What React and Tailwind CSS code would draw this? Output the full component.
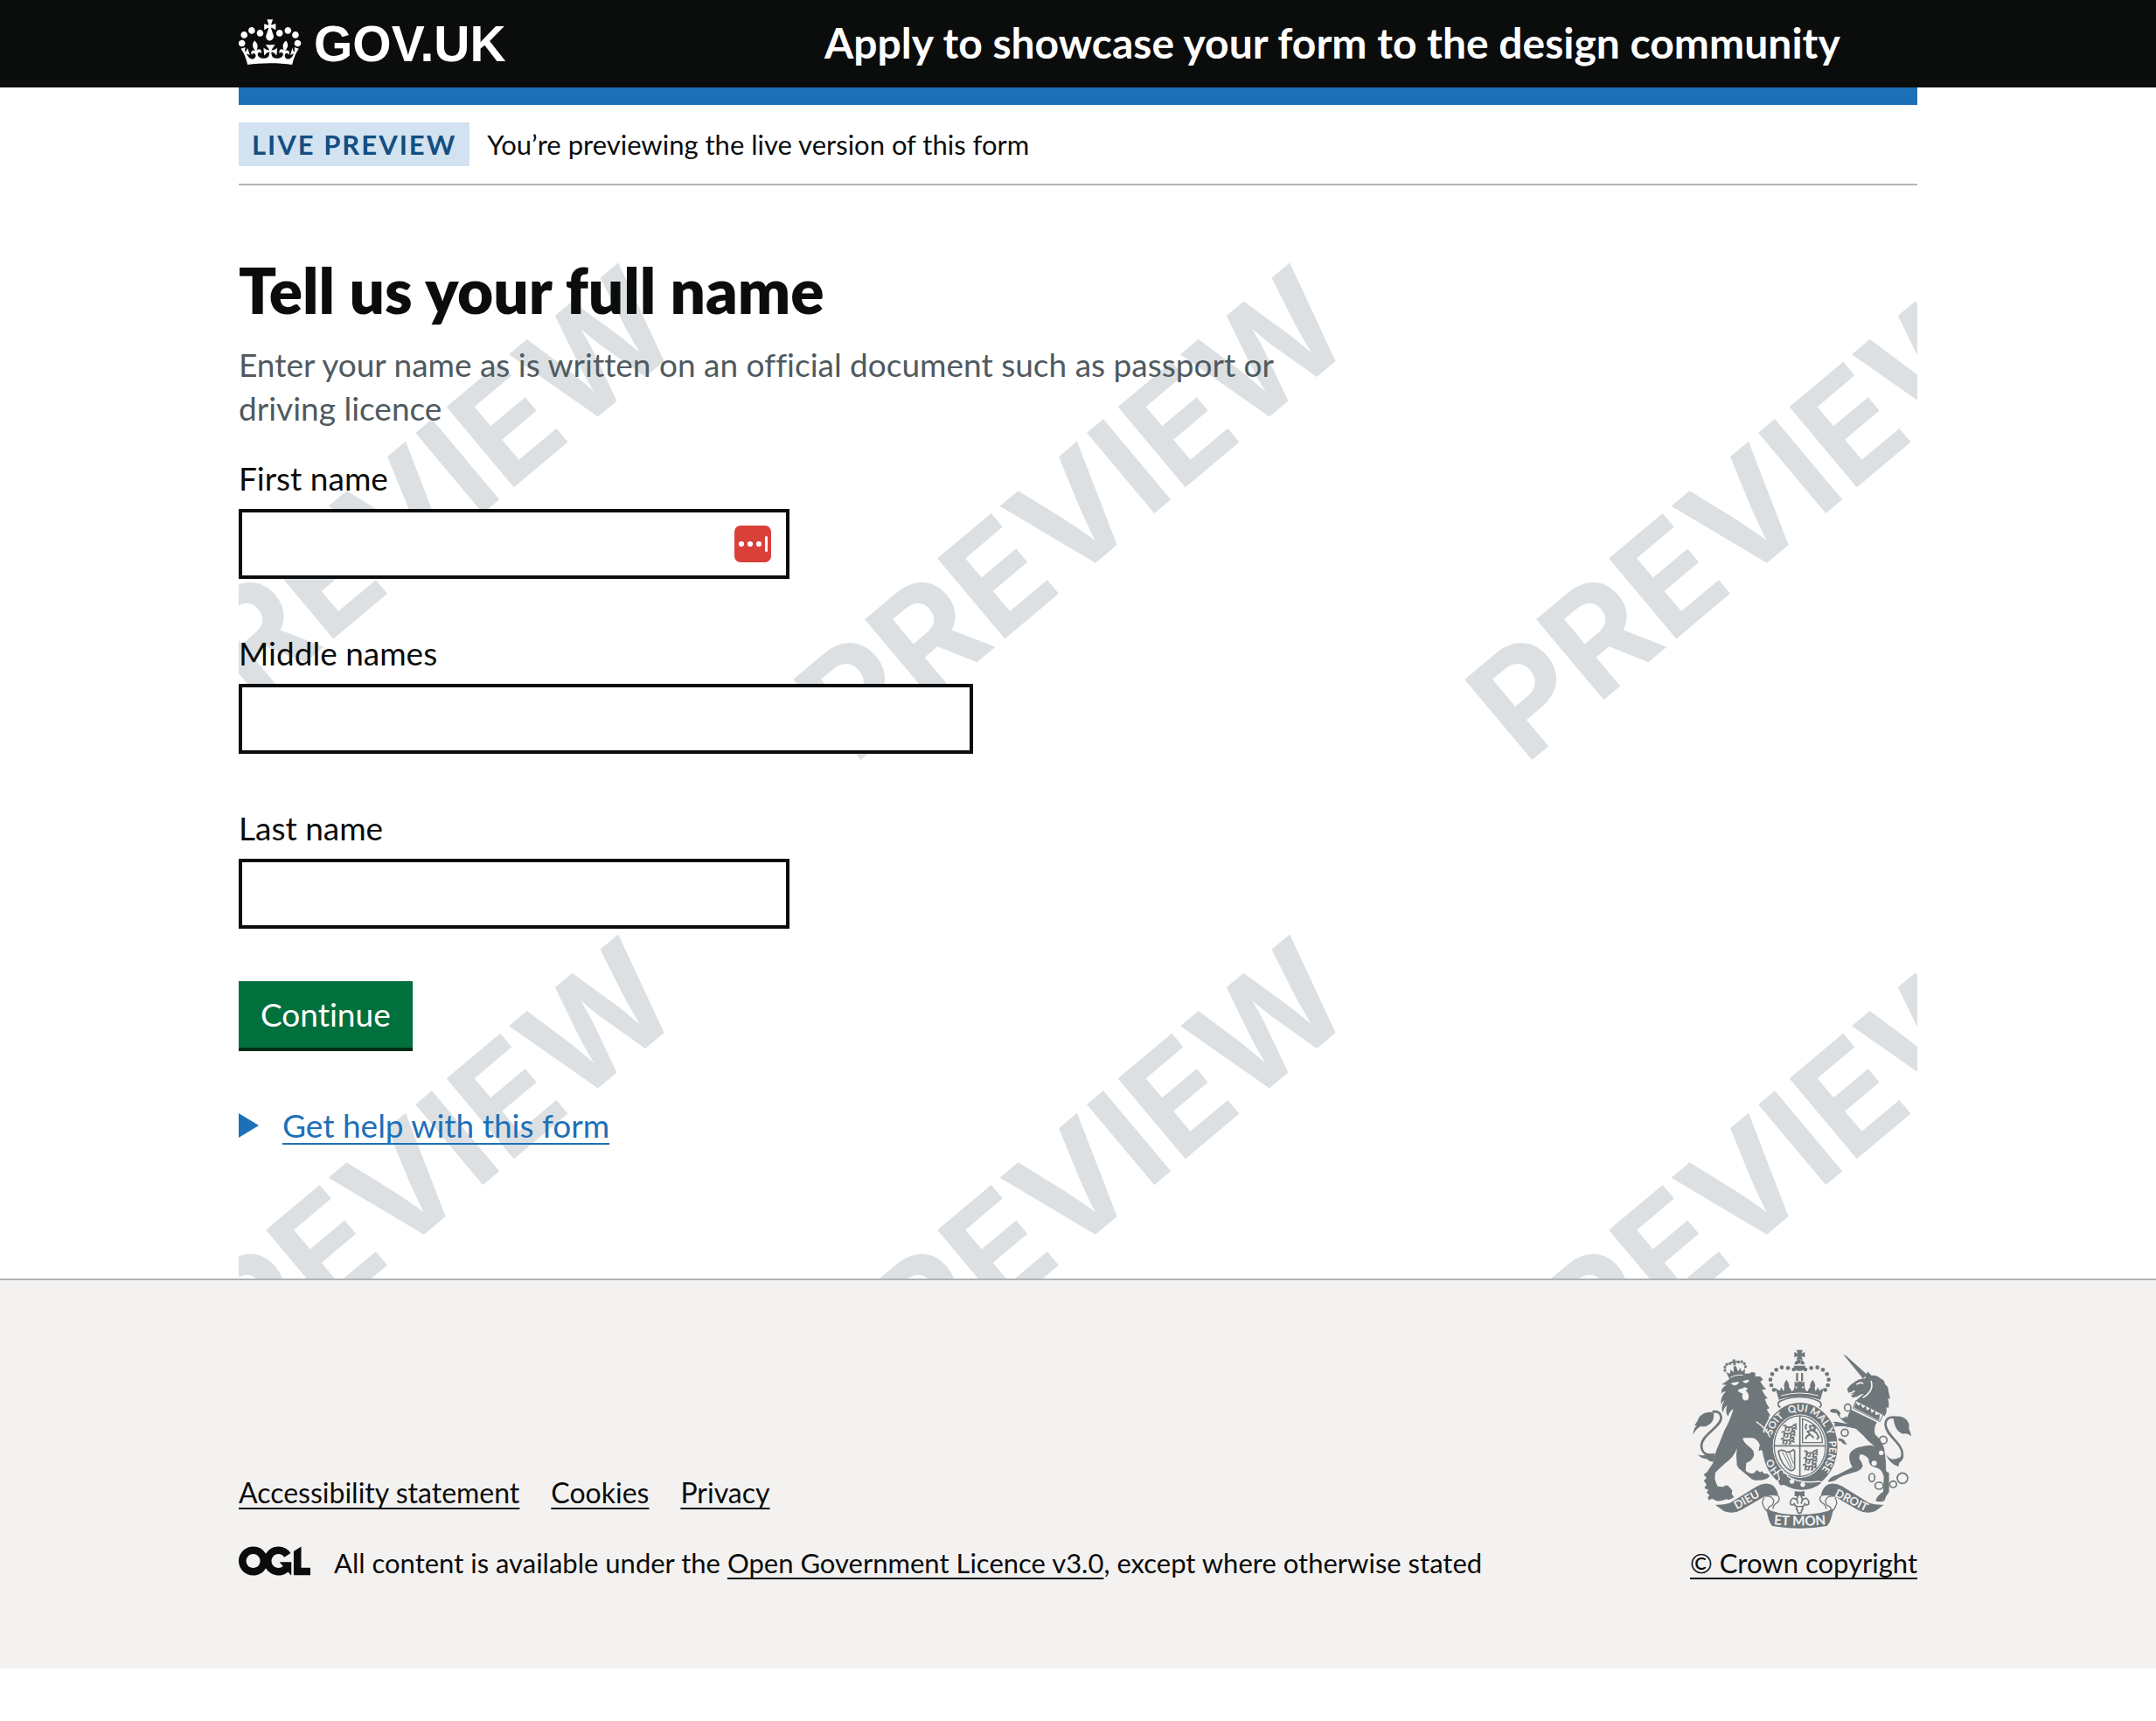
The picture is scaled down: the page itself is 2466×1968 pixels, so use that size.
import React from "react";

const CROWN =
  "M6.7 12.2c1 .4 2.1-.1 2.5-1s-.1-2.1-1-2.5c-1-.4-2.1.1-2.5 1-.4 1 0 2.1 1 2.5m-4.3 2.5c1 .4 2.1-.1 2.5-1s-.1-2.1-1-2.5c-1-.4-2.1.1-2.5 1-.5 1 0 2.1 1 2.5m-1.3 4.8c1 .4 2.1-.1 2.5-1 .4-1-.1-2.1-1-2.5-1-.4-2.1.1-2.5 1-.4 1 0 2.1 1 2.5m10.4-5.8c1 .4 2.1-.1 2.5-1s-.1-2.1-1-2.5c-1-.4-2.1.1-2.5 1s0 2.1 1 2.5m17.4-1.5c-1 .4-2.1-.1-2.5-1s.1-2.1 1-2.5c1-.4 2.1.1 2.5 1 .5 1 0 2.1-1 2.5m4.3 2.5c-1 .4-2.1-.1-2.5-1s.1-2.1 1-2.5c1-.4 2.1.1 2.5 1 .5 1 0 2.1-1 2.5m1.3 4.8c-1 .4-2.1-.1-2.5-1-.4-1 .1-2.1 1-2.5 1-.4 2.1.1 2.5 1 .4 1 0 2.1-1 2.5m-10.4-5.8c-1 .4-2.1-.1-2.5-1s.1-2.1 1-2.5c1-.4 2.1.1 2.5 1s0 2.1-1 2.5m-5.3-4.9 2.4 1.3V6.5l-2.4.8c-.1-.1-.1-.2-.2-.2s1-3 1-3h-3.4l1 3c-.1.1-.2.1-.2.2-.1.1-2.4-.7-2.4-.7v3.5L17 8.8c-.1.1 0 .2.1.3l-1.4 4.2c-.1.2-.1.4-.1.7 0 1.1.8 2.1 1.9 2.2h.6C19.2 16 20 15.1 20 14c0-.2 0-.4-.1-.7l-1.4-4.2c.2-.1.3-.2.3-.3m-1 20.3c4.6 0 8.9.3 12.8.9 1.1-4.6 2.4-7.2 3.8-9.1l-2.6-.9c.3 1.3.3 1.9 0 2.8-.4-.4-.8-1.2-1.1-2.4l-1.2 4.2c.8-.5 1.3-.9 2-.9-1.1 2.6-2.7 3.2-3.6 3-1.2-.2-1.7-1.3-1.5-2.2.3-1.3 1.6-1.5 2.2-.1 1.2-2.4-.8-3.1-2.1-2.4 1.9-1.9 2.1-3.6.6-5.7-2.1 1.6-2.2 3.3-1.2 5.6-1.3-1.5-3.3-.7-2.5 1.7.9-1.4 2.1-.5 2 .8-.2 1.2-1.7 2.1-3.7 2-2.8-.2-3-2.2-3-3.7.7-.1 1.9.5 3 2l.4-4.4c-1.1 1.2-2.2 1.4-3.3 1.4.4-1.2 2.1-3.1 2.1-3.1h-5.5s1.8 2 2.1 3.1c-1.1 0-2.2-.3-3.3-1.4l.4 4.4c1.1-1.5 2.3-2.1 3-2-.1 1.6-.2 3.5-3 3.7-1.9.2-3.5-.8-3.7-2-.2-1.3 1-2.2 1.9-.8.7-2.4-1.3-3.1-2.6-1.7 1-2.3.9-4-1.2-5.6-1.5 2.1-1.3 3.8.6 5.7-1.3-.7-3.2 0-2.1 2.4.6-1.4 1.9-1.1 2.2.1.2.9-.4 1.9-1.5 2.2-1 .2-2.5-.5-3.7-3 .7 0 1.3.4 2 .9L5 20.4c-.3 1.2-.7 1.9-1.2 2.4-.3-.8-.2-1.5 0-2.8l-2.6.9C2.7 22.8 4 25.4 5.1 30c3.8-.5 8.2-.9 12.7-.9";

const OGL =
  "M421.5 142.8V.1l-50.7 32.3v161.1h112.4v-50.7zm-122.3-9.6A47.12 47.12 0 0 1 221 97.8c0-26 21.1-47.1 47.1-47.1 16.7 0 31.4 8.7 39.7 21.8l42.7-27.2A97.63 97.63 0 0 0 268.1 0c-36.5 0-68.3 20.1-85.1 49.7A98 98 0 0 0 97.8 0C43.9 0 0 43.9 0 97.8s43.9 97.8 97.8 97.8c36.5 0 68.3-20.1 85.1-49.7a97.76 97.76 0 0 0 149.6 25.4l19.4 22.2h3v-87.8h-80l24.3 27.5zM97.8 145c-26 0-47.1-21.1-47.1-47.1s21.1-47.1 47.1-47.1 47.1 21.1 47.1 47.1S123.8 145 97.8 145";

const CREST_BEADS = [
  [427, 139], [407, 134], [386, 132], [367, 140], [353, 155], [347, 174], [350, 193], [359, 209],
];

const LION_CROWN_BEADS = [
  [190, 136], [192, 125], [200, 117], [211, 116], [262, 136], [260, 125], [252, 117], [241, 116],
];

const MOTTO = [
  ["HO", "15%"],
  ["SOIT", "36%"],
  ["QUI", "49%"],
  ["MAL", "60%"],
  ["Y", "68%"],
  ["PENSE", "80%"],
];

/* One walking lion of the English quarters. */
function Passant({ x, y }) {
  return (
    <path
      transform={`translate(${x} ${y})`}
      fill="none"
      strokeWidth="5"
      strokeLinecap="round"
      strokeLinejoin="round"
      d="M2 4c10-6 12 8 6 12M8 10l22-2 8-7 8 4-3 6-8 2M12 12l-4 9M22 12l-2 9h-5M31 12l3 9h-5M37 11l9 4M40 1l5-3"
    />
  );
}

function RoyalCrest() {
  return (
    <svg viewBox="80 70 750 615" className="mr-1 h-[205px] w-[250px] fill-[#6f777b] stroke-none" role="img" aria-label="Royal coat of arms">
      {/* crown above the shield */}
      <path d="M436 72h22l-5 12 12-5v19l-12-5 5 12h-22l5-12-12 5v-19l12 5z" />
      <path d="M442 105h10v14h-10zM429 122q2-14 14-16v16zM465 122q-2-14-14-16v16zM427 126h40q-1 18-20 18t-20-18z" />
      <path d="M435 151h7v28h-7zM452 151h7v28h-7z" />
      {CREST_BEADS.map(([x, y]) => (
        <g key={x + "-" + y}>
          <circle cx={x} cy={y} r="7" />
          <circle cx={894 - x} cy={y} r="7" />
        </g>
      ))}
      <path d="M364 203L379 212L384 200L392 214L396 200L402 212Q384 196 402 174Q420 196 404 212L412 200L420 214Q430 210 428 200L436 204Q440 200 438 197L430 202V180L441 186L438 180H458L453 186L464 180V202L456 197Q454 200 458 204L466 200Q464 210 474 214L482 200L490 212Q474 196 492 174Q510 196 492 212L498 200L502 214L510 200L515 212L530 203L518 243Q447 219 376 243Z" />
      <path className="fill-none stroke-[#f3f2f1]" strokeWidth="3" d="M384 229q63-18 127 0" />
      <path className="fill-none stroke-[#6f777b]" strokeWidth="5" d="M384 246q-13 4-10 15t17 9q57-24 114 0 14 2 16-8t-11-16q-63-25-126 0z" />

      {/* lion */}
      <path d="M203 174Q244 152 280 152L280 147L295 150L295 163L312 163L322 174L312 181Q322 196 332 208L318 208Q326 228 338 238L328 240Q332 258 344 272L334 276L346 296L340 304L352 330L358 370L356 430L344 420L338 428L330 418L322 426L316 414L308 418L311 398Q303 378 286 374L252 374Q254 390 272 402Q294 416 290 436Q284 452 264 460L262 486Q276 500 292 494L300 484L312 492L318 488L326 497L336 496L345 505L334 514Q306 524 284 516L250 488Q236 478 232 468L230 434L232 410Q222 440 190 462L158 492L156 514Q160 530 166 540L186 542Q190 534 202 538L216 554L214 566L222 576Q208 590 196 584Q180 592 162 590L146 582L136 588L132 578L138 570L128 562L134 552L120 546L128 534L118 520L128 512L118 500L130 490L150 460Q154 430 170 396L190 346Q208 316 220 274Q206 282 202 300Q190 288 198 262Q186 272 184 288Q174 270 190 244Q180 250 178 262Q172 238 194 214Q184 214 178 222Q178 200 196 192L180 190L190 184Z" />
      <path className="fill-[#f3f2f1]" d="M210 187Q228 180 240 182Q234 194 222 194ZM250 180Q262 174 274 174Q272 184 262 186ZM234 212Q240 204 250 204L258 200L270 204L262 212L268 218Q276 232 270 242Q262 250 252 240Q248 232 252 222Q242 220 234 212Z" />
      <g transform="rotate(-10 225 135)">
        <path d="M193 142l12 9 4-14 9 11 4-20h8l4 20 9-11 4 14 12-9-6 28q-28-8-52 0z" />
        <path d="M221 104h10l-2 7 7-2v9l-7-2 2 9h-10l2-9-7 2v-9l7 2z" />
        {LION_CROWN_BEADS.map(([x, y]) => (
          <circle key={x + "-" + y} cx={x} cy={y} r="5" />
        ))}
        <path className="fill-none stroke-[#f3f2f1]" strokeWidth="3" d="M204 163q22-7 44 0" />
      </g>
      <path className="fill-none stroke-[#6f777b]" strokeWidth="8" d="M156 430Q112 440 110 400C112 362 178 336 178 304Q176 280 148 284" />
      <path d="M82 362Q82 342 94 332L86 330Q98 316 100 306Q118 280 152 286Q156 312 140 326Q126 338 108 334Q92 342 82 362ZM98 430Q108 436 122 432L156 434L150 456Q136 456 130 446Q108 446 98 430Z" />

      {/* unicorn */}
      <path d="M597 87L606 92L680 158L664 170Z" />
      <path d="M672 170L680 146L694 160Q712 156 724 170Q738 174 740 190Q752 196 752 214L758 240L750 238Q756 256 752 272L745 268Q748 288 738 300L732 292L640 246L656 232L668 222Q652 224 646 232L628 236L624 228L634 222L620 224Q612 218 610 206Q622 190 636 182Q652 170 672 170Z" />
      <path className="fill-none stroke-[#f3f2f1]" strokeWidth="5" d="M692 178Q704 212 664 236M642 190L656 184L666 188M616 222Q630 218 636 212" />
      <path className="fill-[#f3f2f1] stroke-[#6f777b]" strokeWidth="3" d="M640 246L733 294L723 318L630 272Z" />
      <path d="M634 270L640 252L650 264L656 256L664 272L674 264L678 280L690 272L694 288L706 280L708 296L722 292L720 314Z" />
      <path d="M622 276L712 320Q700 342 706 362Q738 390 740 430Q744 456 744 488L754 494L754 560L744 574L738 590Q722 596 708 590Q712 572 734 558L736 506Q728 476 704 474Q684 470 684 446Q674 432 656 430Q650 436 652 446Q662 458 664 470Q658 486 640 490L600 502L580 512Q566 526 544 524Q552 506 578 500L628 474Q612 446 620 426Q636 406 660 404Q684 396 704 402Q680 384 666 366L640 342L600 334L572 334Q562 346 566 360L582 376Q588 374 598 380L610 396Q596 398 590 386L574 382L560 362Q552 340 570 324L556 320Q548 326 540 322L572 318L612 326Q586 312 574 288Q562 290 552 284Q550 274 566 274Q582 276 588 290L610 304Z" />
      <g className="fill-[#f3f2f1]">
        <circle cx="603" cy="355" r="12" />
        <circle cx="727" cy="425" r="8" />
        <circle cx="703" cy="461" r="9" />
        <circle cx="594" cy="297" r="9" />
      </g>
      <g className="fill-none stroke-[#6f777b]" strokeWidth="5">
        <ellipse cx="612" cy="270" rx="11" ry="12" />
        <ellipse cx="602" cy="356" rx="12" ry="12" />
        <circle cx="734" cy="381" r="13" />
        <ellipse cx="695" cy="510" rx="10" ry="14" />
        <ellipse cx="720" cy="538" rx="14" ry="12" />
        <ellipse cx="768" cy="533" rx="12" ry="11" />
        <circle cx="800" cy="512" r="18" />
      </g>
      <path className="fill-none stroke-[#6f777b]" strokeWidth="8" d="M780 304Q740 298 742 330C744 366 800 392 800 430Q798 456 768 450" />
      <path d="M768 302Q796 294 812 310Q826 322 822 340L832 370Q820 356 802 360Q774 354 768 302ZM742 428Q754 448 772 448L804 436Q802 452 790 458L786 472Q756 464 742 428Z" />

      {/* garter and shield */}
      <ellipse cx="448" cy="402" rx="134" ry="154" className="fill-[#f3f2f1]" />
      <ellipse cx="448" cy="402" rx="129" ry="149" />
      <ellipse cx="448" cy="402" rx="93" ry="109" className="fill-[#f3f2f1]" />
      <ellipse cx="448" cy="402" rx="88" ry="104" className="fill-none stroke-[#6f777b]" strokeWidth="4" />
      <path className="fill-none stroke-[#6f777b]" strokeWidth="5" d="M448 299v206M361 401h174" />
      <g className="stroke-[#6f777b]">
        <Passant x={390} y={328} />
        <Passant x={385} y={350} />
        <Passant x={382} y={373} />
        <Passant x={462} y={416} />
        <Passant x={460} y={439} />
        <Passant x={458} y={462} />
      </g>
      <path className="fill-none stroke-[#6f777b]" strokeWidth="4" d="M457 308v82h68q0-60-68-82z" />
      <path className="fill-none stroke-[#6f777b]" strokeWidth="6" strokeLinejoin="round" d="M468 378q2-12 16-16l-10-10 13-4-6-15 14-1 6 9-10 6 14 10 8 14-7 8M484 362l12 12M489 350l12-4M471 345q-8-12 2-18" />
      <path className="fill-none stroke-[#6f777b]" strokeWidth="5" d="M374 420Q386 412 398 420T426 414L430 420V478Q424 488 416 486Q384 470 374 420Z" />
      <path className="fill-none stroke-[#6f777b]" strokeWidth="3" d="M388 422L418 482M399 420L422 476M410 418L426 462" />
      <path id="garter-line" className="fill-none" d="M448 521A101 119 0 0 1 448 283A101 119 0 0 1 448 521" />
      <g className="fill-[#f3f2f1] font-bold [font-family:Lato,sans-serif]" fontSize="34" textAnchor="middle">
        {MOTTO.map(([word, at]) => (
          <text key={word}>
            <textPath href="#garter-line" startOffset={at}>{word}</textPath>
          </text>
        ))}
      </g>
      <path className="stroke-[#f3f2f1]" strokeWidth="4" d="M374 503q-4-18 10-20 9 1 9 12 11 0 14 11 43 26 107 17l12 5q-32 26-73 26-31 0-60-17-16 5-18-8-8-8 3-14z" />
      <circle cx="421" cy="523" r="8" className="fill-[#f3f2f1]" />
      <circle cx="458" cy="534" r="8" className="fill-[#f3f2f1]" />
      {/* lion's paw laid over the garter */}
      <path d="M296 330Q328 352 342 386L352 420L346 430L340 420L336 428L330 418L322 426L316 414L306 418L311 398L296 360Z" />
      <path className="fill-none stroke-[#f3f2f1]" strokeWidth="4" d="M298 318Q332 340 346 372" />

      {/* ribbons */}
      <path d="M158 603q25 2 50-6l92-57q32-17 56-3 16 15 18 36-28-5-50 3l-75 44q-30 18-62 5z" />
      <path d="M736 603q-25 2-50-6l-92-57q-32-17-56-3-16 15-18 36 28-5 50 3l75 44q30 18 62 5z" />
      <path d="M333 617q8 48 20 59 94 17 188 0 14-13 22-59-40 20-115 20t-115-20z" />
      <path className="fill-none stroke-[#6f777b]" strokeWidth="4" d="M374 573q8 14-4 23-15 8-14 22M326 578q-11 16-3 29 4 12 12 18M330 574q22-2 28 14 0 16-11 20-11 5-6 15M520 573q-8 14 4 23 15 8 14 22M568 578q11 16 3 29-4 12-12 18M564 574q-22-2-28 14 0 16 11 20 11 5 6 15" />
      <path id="ribbon-left" className="fill-none" d="M218 627L330 564" />
      <path id="ribbon-right" className="fill-none" d="M557 568L682 631" />
      <path id="ribbon-mid" className="fill-none" d="M350 670Q448 680 546 670" />
      <g className="fill-[#f3f2f1] font-bold [font-family:Lato,sans-serif]" textAnchor="middle">
        <text fontSize="39"><textPath href="#ribbon-left" startOffset="48%">DIEU</textPath></text>
        <text fontSize="39"><textPath href="#ribbon-right" startOffset="50%">DROIT</textPath></text>
        <text fontSize="46"><textPath href="#ribbon-mid" startOffset="50%">ET MON</textPath></text>
      </g>
      <path d="M430 556q16 4 34 0v18h-34z" />
      <path className="fill-[#f3f2f1] stroke-[#6f777b]" strokeWidth="5" strokeLinejoin="round" d="M447 566q14 14 6 32 2-18 17-17 11 7 8 20-7 7-13-2-1 10-9 10l2 10-5 4q3 8-6 9-9-1-6-9l-5-4 2-10q-8 0-9-10-6 9-13 2-3-13 8-20 15-1 17 17-8-18 6-32z" />
      <path className="fill-none stroke-[#6f777b]" strokeWidth="4" d="M435 609h24" />
    </svg>
  );
}

function Watermark() {
  return (
    <svg aria-hidden="true" className="pointer-events-none absolute inset-0 -z-10 size-full">
      <defs>
        <pattern id="preview-mark" patternUnits="userSpaceOnUse" x="-207" y="0" width="768" height="768">
          <text
            transform="translate(142 664) rotate(-40)"
            fontSize="165"
            className="fill-[#dce0e3] font-bold [font-family:Inter,sans-serif]"
          >
            PREVIEW
          </text>
        </pattern>
      </defs>
      <rect width="100%" height="100%" fill="url(#preview-mark)" />
    </svg>
  );
}

function Field({ id, label, width, children }) {
  return (
    <div className="mb-[60px]">
      <label htmlFor={id} className="mb-[10px] block w-fit">{label}</label>
      <div className={"relative max-w-full " + width}>
        <input
          id={id}
          name={id}
          type="text"
          className="block h-20 w-full border-4 border-[#0b0c0c] bg-white px-2 outline-none"
        />
        {children}
      </div>
    </div>
  );
}

const LINK = "underline decoration-2 [text-decoration-skip-ink:none]";
const CONTAINER = "mx-auto w-full max-w-[1920px]";

export default function App() {
  return (
    <div className="bg-white text-[37px] leading-[50px] text-[#0b0c0c] [font-family:Lato,sans-serif] [font-variant-ligatures:none]">
      <header className="bg-[#0b0c0c] text-white">
        <div className={CONTAINER + " flex h-[100px] items-center gap-[30px]"}>
          <div className="w-1/3 shrink-0">
            <a href="#home" aria-label="GOV.UK" className="flex w-fit items-center gap-[14px] pb-2">
              <svg viewBox="0 0 36 32" className="h-16 w-[72px] fill-white" aria-hidden="true">
                <path fillRule="evenodd" d={CROWN} />
              </svg>
              <span className="pt-2 text-[57px] leading-[64px] font-bold [font-family:'Liberation_Sans',sans-serif]">GOV.UK</span>
            </a>
          </div>
          <a href="#form" className="pb-[2px] text-[48px] leading-[60px] font-bold whitespace-nowrap">
            Apply to showcase your form to the design community
          </a>
        </div>
      </header>

      <div className={CONTAINER}>
        <div className="h-5 bg-[#1d70b8]" />
        <div className="flex items-center gap-5 border-b-2 border-[#b1b4b6] py-5 text-[31px]">
          <strong className="bg-[#d2e2f1] px-[15px] font-bold tracking-[2px] text-[#144e81]">LIVE PREVIEW</strong>
          <span>You’re previewing the live version of this form</span>
        </div>

        <main className="relative isolate pt-20 pb-[150px]">
          <Watermark />
          <form className="max-w-[1260px]" onSubmit={(e) => e.preventDefault()}>
            <fieldset aria-describedby="name-hint">
              <legend>
                <h1 className="mb-5 text-[71px] leading-[80px] font-extrabold">Tell us your full name</h1>
              </legend>
              <p id="name-hint" className="mb-[30px] text-[#505a5f]">
                Enter your name as is written on an official document such as passport or driving licence
              </p>
              <Field id="first-name" label="First name" width="w-[630px]">
                <button type="button" aria-label="Fill in saved name" className="absolute top-[19px] right-[21px]">
                  <svg viewBox="0 0 42 42" className="size-[42px]">
                    <rect width="42" height="42" rx="7" fill="#d9403a" />
                    <circle cx="8" cy="21" r="3.1" fill="#fff" />
                    <circle cx="18" cy="21" r="3.1" fill="#fff" />
                    <circle cx="28" cy="21" r="3.1" fill="#fff" />
                    <rect x="35" y="12" width="3" height="18" rx="1.5" fill="#fff" />
                  </svg>
                </button>
              </Field>
              <Field id="middle-names" label="Middle names" width="w-[840px]" />
              <Field id="last-name" label="Last name" width="w-[630px]" />
            </fieldset>
            <button type="submit" className="mb-[60px] block h-20 border-b-4 border-[#002d18] bg-[#00703c] px-[25px] text-white">
              Continue
            </button>
          </form>
          <details>
            <summary className="flex w-fit cursor-pointer list-none items-center gap-[27px] text-[#1d70b8]">
              <svg viewBox="0 0 23 28" className="h-7 w-[23px] fill-current" aria-hidden="true">
                <path d="M0 0l23 14L0 28z" />
              </svg>
              <span className={LINK + " underline-offset-[6px]"}>Get help with this form</span>
            </summary>
          </details>
        </main>
      </div>

      <footer className="border-t-2 border-[#b1b4b6] bg-[#f3f2f1] pt-[79px] pb-[101px] text-[31px] leading-[40px]">
        <div className={CONTAINER + " flex items-end justify-between"}>
          <div>
            <nav aria-label="Support links" className="mb-10 flex gap-9 text-[32px]">
              <a href="#accessibility" className={LINK + " underline-offset-[5px]"}>Accessibility statement</a>
              <a href="#cookies" className={LINK + " underline-offset-[5px]"}>Cookies</a>
              <a href="#privacy" className={LINK + " underline-offset-[5px]"}>Privacy</a>
            </nav>
            <div className="flex items-center gap-[27px]">
              <svg viewBox="0 0 483.2 195.7" className="mb-1 h-[34px] w-[82px] fill-[#0b0c0c]" role="img" aria-label="Open Government Licence">
                <path d={OGL} />
              </svg>
              <span>
                All content is available under the{" "}
                <a href="#licence" className={LINK + " underline-offset-[5px]"}>Open Government Licence v3.0</a>, except where
                otherwise stated
              </span>
            </div>
          </div>
          <a href="#copyright" className="flex flex-col items-center gap-[19px]">
            <RoyalCrest />
            <span className={LINK + " underline-offset-[5px]"}>© Crown copyright</span>
          </a>
        </div>
      </footer>
    </div>
  );
}
